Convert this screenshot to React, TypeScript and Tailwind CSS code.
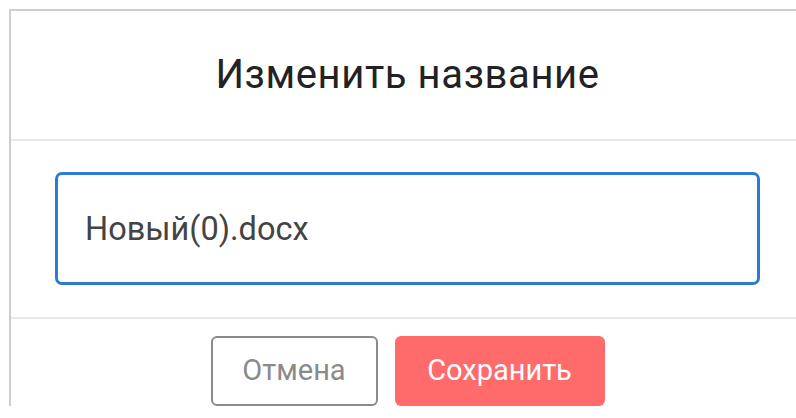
import { useState } from 'react';

export default function App() {
  const [name, setName] = useState('Новый(0).docx');

  return (
    <div className="w-[796px] h-[418px] overflow-hidden bg-white pl-[9px] pt-[9px] font-['Roboto',sans-serif]">
      <div className="w-[795px] border-l-2 border-t-2 border-[#cecece] bg-white">
        <div className="h-[130px] flex items-center justify-center border-b-2 border-[#e8e8e8]">
          <h1 className="text-[40px] font-normal text-[#222] tracking-[0.6px]">Изменить название</h1>
        </div>

        <div className="px-[44px] pt-[31px] pb-[32px] border-b-2 border-[#e8e8e8]">
          <input
            type="text"
            value={name}
            onChange={(e) => setName(e.target.value)}
            className="w-full h-[113px] px-[27px] border-[3px] border-[#2a7ad6] rounded-[7px] text-[32.5px] text-[#444] outline-none"
          />
        </div>

        <div className="flex justify-center gap-[17px] pt-[17px]">
          <button className="w-[167px] h-[70px] border-2 border-[#8a8a8a] rounded-[6px] text-[29px] text-[#8a8a8a] bg-white">
            Отмена
          </button>
          <button className="w-[210px] h-[70px] rounded-[6px] text-[29px] text-white bg-[#ff6b6b]">
            Сохранить
          </button>
        </div>
      </div>
    </div>
  );
}
